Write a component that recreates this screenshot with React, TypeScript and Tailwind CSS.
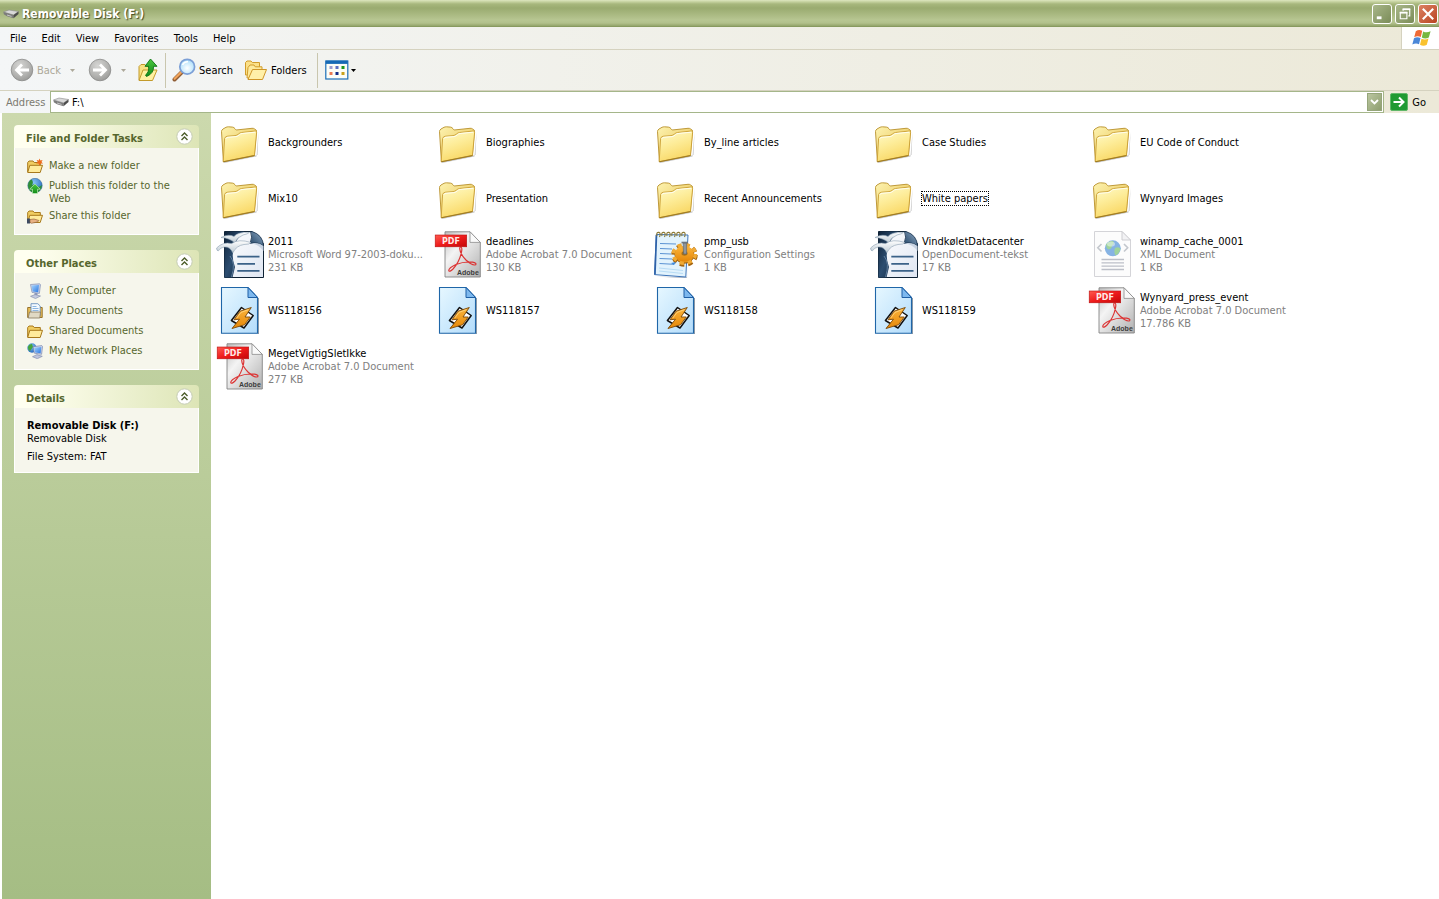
import React, { useState } from 'react';

type IconKind = 'folder' | 'writer' | 'pdf' | 'config' | 'xml' | 'winamp';

interface FileEntry {
  name: string;
  icon: IconKind;
  type?: string;
  size?: string;
  focused?: boolean;
}

interface TaskLink {
  label: string;
  icon: React.ReactNode;
}

const files: FileEntry[] = [
  { name: 'Backgrounders', icon: 'folder' },
  { name: 'Biographies', icon: 'folder' },
  { name: 'By_line articles', icon: 'folder' },
  { name: 'Case Studies', icon: 'folder' },
  { name: 'EU Code of Conduct', icon: 'folder' },
  { name: 'Mix10', icon: 'folder' },
  { name: 'Presentation', icon: 'folder' },
  { name: 'Recent Announcements', icon: 'folder' },
  { name: 'White papers', icon: 'folder', focused: true },
  { name: 'Wynyard Images', icon: 'folder' },
  { name: '2011', icon: 'writer', type: 'Microsoft Word 97-2003-doku...', size: '231 KB' },
  { name: 'deadlines', icon: 'pdf', type: 'Adobe Acrobat 7.0 Document', size: '130 KB' },
  { name: 'pmp_usb', icon: 'config', type: 'Configuration Settings', size: '1 KB' },
  { name: 'VindkøletDatacenter', icon: 'writer', type: 'OpenDocument-tekst', size: '17 KB' },
  { name: 'winamp_cache_0001', icon: 'xml', type: 'XML Document', size: '1 KB' },
  { name: 'WS118156', icon: 'winamp' },
  { name: 'WS118157', icon: 'winamp' },
  { name: 'WS118158', icon: 'winamp' },
  { name: 'WS118159', icon: 'winamp' },
  { name: 'Wynyard_press_event', icon: 'pdf', type: 'Adobe Acrobat 7.0 Document', size: '17.786 KB' },
  { name: 'MegetVigtigSletIkke', icon: 'pdf', type: 'Adobe Acrobat 7.0 Document', size: '277 KB' },
];

const menuItems = ['File', 'Edit', 'View', 'Favorites', 'Tools', 'Help'];

/** Gradients shared by all icons */
function IconDefs() {
  return (
    <svg className="absolute w-0 h-0" aria-hidden="true">
      <defs>
        <linearGradient id="folderBack" x1="0" y1="0" x2="1" y2="1">
          <stop offset="0" stopColor="#fdf3b0" />
          <stop offset="1" stopColor="#e5bb45" />
        </linearGradient>
        <linearGradient id="folderFront" x1="0" y1="0" x2="0.4" y2="1">
          <stop offset="0" stopColor="#fffbcb" />
          <stop offset="0.5" stopColor="#fdec98" />
          <stop offset="1" stopColor="#f9d866" />
        </linearGradient>
        <linearGradient id="navy" x1="0" y1="0" x2="1" y2="1">
          <stop offset="0" stopColor="#0e2238" />
          <stop offset="0.5" stopColor="#2c4d70" />
          <stop offset="1" stopColor="#12283f" />
        </linearGradient>
        <linearGradient id="writerPage" x1="0" y1="0" x2="1" y2="1">
          <stop offset="0" stopColor="#ffffff" />
          <stop offset="1" stopColor="#dfe6f2" />
        </linearGradient>
        <linearGradient id="bird" x1="0" y1="0" x2="0" y2="1">
          <stop offset="0" stopColor="#ffffff" />
          <stop offset="1" stopColor="#bccad3" />
        </linearGradient>
        <linearGradient id="fold" x1="0" y1="1" x2="1" y2="0">
          <stop offset="0" stopColor="#1f4061" />
          <stop offset="1" stopColor="#8fabc6" />
        </linearGradient>
        <linearGradient id="pdfPage" x1="0" y1="0" x2="1" y2="1">
          <stop offset="0" stopColor="#bdbdbd" />
          <stop offset="0.35" stopColor="#f4f4f4" />
          <stop offset="1" stopColor="#b0b0b0" />
        </linearGradient>
        <linearGradient id="pdfRed" x1="0" y1="0" x2="1" y2="1">
          <stop offset="0" stopColor="#ff5a50" />
          <stop offset="0.5" stopColor="#ee1c1c" />
          <stop offset="1" stopColor="#c40808" />
        </linearGradient>
        <linearGradient id="bluePage" x1="0" y1="0" x2="1" y2="1">
          <stop offset="0" stopColor="#e6f7ff" />
          <stop offset="1" stopColor="#b3dcfb" />
        </linearGradient>
        <linearGradient id="orange" x1="0" y1="0" x2="0" y2="1">
          <stop offset="0" stopColor="#fbb53d" />
          <stop offset="1" stopColor="#e58708" />
        </linearGradient>
        <radialGradient id="navGray" cx="0.4" cy="0.3" r="0.8">
          <stop offset="0" stopColor="#d6d6d4" />
          <stop offset="0.6" stopColor="#b2b2b0" />
          <stop offset="1" stopColor="#949492" />
        </radialGradient>
        <radialGradient id="lens" cx="0.5" cy="0.6" r="0.6">
          <stop offset="0" stopColor="#ffffff" />
          <stop offset="1" stopColor="#a8ddfb" />
        </radialGradient>
        <radialGradient id="globe" cx="0.4" cy="0.3" r="0.8">
          <stop offset="0" stopColor="#86c5f5" />
          <stop offset="1" stopColor="#1b5fb8" />
        </radialGradient>
        <linearGradient id="screen" x1="0" y1="0" x2="1" y2="1">
          <stop offset="0" stopColor="#a6d6ff" />
          <stop offset="1" stopColor="#2a76e0" />
        </linearGradient>
        <linearGradient id="greenArrow" x1="0" y1="0" x2="0" y2="1">
          <stop offset="0" stopColor="#4cc740" />
          <stop offset="1" stopColor="#118a18" />
        </linearGradient>
      </defs>
    </svg>
  );
}

function FolderIcon() {
  return (
    <svg viewBox="0 0 48 48" className="w-12 h-12 shrink-0" aria-hidden="true">
      <path d="M8 45L40.5 38.5L42.5 14L41.5 37L8 44Z" fill="#8b8b8b" opacity="0.5" />
      <path
        d="M5.5 13.5Q5.5 12 7 11L10 9.3Q11 8.8 12.5 8.8L16.5 9.1Q18 9.3 19 10.7L20.2 12L36 10.3Q37.5 10.1 38.5 10.9L40.5 12.4L38.3 37.5L7.4 43.6Z"
        fill="url(#folderBack)"
        stroke="#b8902a"
        strokeWidth="0.9"
        strokeLinejoin="round"
      />
      <path
        d="M8.6 20.5Q9.2 18.4 11.5 18.2L19 17.6Q21 17.4 22.5 16Q23.8 14.8 25.5 14.5L39.4 13Q40.8 12.9 40.6 14.6L38.5 37.3L7.2 43.7Z"
        fill="url(#folderFront)"
        stroke="#c99e33"
        strokeWidth="0.9"
        strokeLinejoin="round"
      />
      <path d="M9.8 20.8Q10.2 19.5 12 19.3L20 18.6Q22 18.4 23.4 16.8Q24.3 15.7 26 15.5L39.2 14.2" fill="none" stroke="#fffef0" strokeWidth="1" />
      <path d="M7.2 43.8L38.5 37.6" stroke="#9c7a24" strokeWidth="1" />
    </svg>
  );
}

function WriterIcon() {
  return (
    <svg viewBox="0 0 48 48" className="w-12 h-12 shrink-0" aria-hidden="true">
      <path d="M8.5 1.5H36L47.5 13.5V47.5H8.5Z" fill="url(#writerPage)" stroke="#0f2234" />
      <path d="M8.5 1.5H28Q20 9 18 17Q15 27 19 37L16.5 47.5H8.5Z" fill="url(#navy)" />
      <path d="M14 26Q20 33 15.5 47" fill="none" stroke="#5f7d9d" strokeWidth="1" />
      <path d="M34.5 1.5Q37 7 34 13.5Q42 11.5 47.5 16Q47 5 36 1.5Z" fill="url(#fold)" stroke="#16304b" strokeWidth="0.8" />
      <path d="M34 13.5Q42 11.5 47.5 16V21Q42 13.5 34 13.5Z" fill="#c8d3e2" />
      <path d="M21.3 26.7H43.5M21.3 33.8H39M21.3 40.8H43.5" stroke="#3b6288" strokeWidth="1.7" />
      <path d="M5 7.5Q12.5 3.5 18 6.5Q22 1.8 33.5 2.4Q32 4 27 5Q21 7.5 18.8 13Q14 8 5 7.5Z" fill="url(#bird)" stroke="#8ba0b2" strokeWidth="0.6" />
      <path d="M0.6 18Q7 11.5 15.5 13.6Q22.5 8.5 35 12.5Q34 14.5 28 14.5Q20.5 15.5 16.8 22.8Q14 16.5 8.5 17Q4.5 17.3 2.2 21Q0.6 20.8 0.6 18Z" fill="url(#bird)" stroke="#8ba0b2" strokeWidth="0.6" />
    </svg>
  );
}

function PdfIcon() {
  return (
    <svg viewBox="0 0 48 48" className="w-12 h-12 shrink-0" aria-hidden="true">
      <path d="M11 1.8H36L46.3 12.4V47H11Z" fill="url(#pdfPage)" stroke="#858585" strokeWidth="0.9" />
      <path d="M36 1.8V12.4H46.3Z" fill="#fafafa" stroke="#8c8c8c" strokeWidth="0.8" />
      <path
        d="M26.5 17Q28.5 17 27.5 22Q25.5 32 19 39Q15.5 42.5 14.8 40.5Q14.5 38 22 34.5Q30 31.3 38.5 32.2Q43 33 41.6 34.8Q38.5 36 32 30Q26 24 25.7 18.5Q25.8 17 26.5 17Z"
        fill="none"
        stroke="#dc3434"
        strokeWidth="1.2"
      />
      <rect x="1.2" y="5" width="31.5" height="11.8" fill="url(#pdfRed)" stroke="#b81010" strokeWidth="0.6" />
      <text x="8" y="14" className="font-['DejaVu_Sans',sans-serif] text-[8px] font-bold" fill="#ffe9e6">
        PDF
      </text>
      <text x="23" y="45" className="font-['Liberation_Sans',sans-serif] text-[7px] font-bold" fill="#3c3c3c">
        Adobe
      </text>
    </svg>
  );
}

function ConfigIcon() {
  return (
    <svg viewBox="0 0 48 48" className="w-12 h-12 shrink-0" aria-hidden="true">
      <path d="M4.5 46.5L35 48.5L37 8L35 47Z" fill="#8d98a8" opacity="0.6" />
      <path d="M4.3 4.5L36 5L33.8 47L2.5 44.6Z" fill="#e2f3fd" stroke="#3d74b8" strokeWidth="1" />
      <path d="M3 44.5L4.5 5" stroke="#2e61a8" strokeWidth="1.6" />
      <path d="M8 13.5L24 14M8 18.5L20 19M8 23.5L19 24M7.5 28.5L20 29M7.5 33.5L22 34.3" stroke="#5b93d3" strokeWidth="1" />
      <path d="M7 38L31 40.5M7 41L31 43.5" stroke="#b8dcf5" strokeWidth="1" />
      <path
        d="M5 6Q4 2 7 2.4Q9 3 7.5 7M10 6Q9 2 12 2.4Q14 3 12.5 7M15 6Q14 2 17 2.4Q19 3 17.5 7M20 6Q19 2 22 2.4Q24 3 22.5 7M25 6Q24 2 27 2.4Q29 3 27.5 7M30 6Q29 2 32 2.4Q34 3 32.5 7"
        fill="none"
        stroke="#8c7a35"
        strokeWidth="1.1"
      />
      <ellipse cx="32.5" cy="25" rx="9.5" ry="8.2" fill="#e59a23" stroke="#9c5d0a" strokeWidth="1" />
      <ellipse cx="32.5" cy="25" rx="11" ry="9.5" fill="none" stroke="#a4640e" strokeWidth="4.5" strokeDasharray="4.4 3.7" />
      <ellipse cx="32.3" cy="24" rx="11" ry="9.2" fill="none" stroke="#f0aa35" strokeWidth="3.6" strokeDasharray="4.2 3.9" />
      <ellipse cx="32.3" cy="23.8" rx="9.4" ry="7.8" fill="url(#orange)" />
      <ellipse cx="32.5" cy="23.5" rx="3" ry="2.2" fill="#a3701f" />
      <path d="M31 13H34.6V24H31.6Z" fill="#8f969d" stroke="#596068" strokeWidth="0.6" />
      <path d="M29.5 12.5H36" stroke="#6e757d" strokeWidth="1.6" />
      <path d="M19 33L24 32L22 35Z" fill="#3c8be0" />
    </svg>
  );
}

function XmlIcon() {
  return (
    <svg viewBox="0 0 48 48" className="w-12 h-12 shrink-0" aria-hidden="true">
      <path d="M6.5 1.5H34L42.5 10V46.5H6.5Z" fill="#fcfcfc" stroke="#d4d4d8" />
      <path d="M34 1.5V10H42.5Z" fill="#f2f2f4" stroke="#c9c9ce" strokeWidth="0.9" />
      <path d="M13.5 14L9.8 17.8L13.5 21.5M36 14L39.7 17.8L36 21.5" fill="none" stroke="#c3c7cd" strokeWidth="1.6" />
      <circle cx="24.8" cy="18.3" r="8" fill="#86b3e3" />
      <path d="M18 14.5Q21 10.5 25 11Q27 13.5 24 15.5Q24 19 20.5 19.5Q18 18 18 14.5ZM27 18Q31 16 32.5 19Q31 24 27.5 25.5Q25.5 22 27 18Z" fill="#9fd39b" />
      <ellipse cx="23" cy="14" rx="4" ry="2.6" fill="#ffffff" opacity="0.45" />
      <path d="M13.5 29.5H36M13.5 32.8H36M13.5 36.2H36M13.5 39.5H36" stroke="#bcbfc8" strokeWidth="1.3" />
    </svg>
  );
}

function WinampIcon() {
  return (
    <svg viewBox="0 0 48 48" className="w-12 h-12 shrink-0" aria-hidden="true">
      <path d="M7 48.3H42.5V12" fill="none" stroke="#8f9aa6" strokeWidth="1" />
      <path d="M5.5 1.5H32L41.5 11.5V47.3H5.5Z" fill="url(#bluePage)" stroke="#1f66a8" strokeWidth="1.1" />
      <path d="M32 1.5V11.5H41.5Z" fill="#7db8ee" stroke="#1f5fa5" strokeWidth="1" />
      <path d="M25.5 21.5L37.2 29.5L28 42L15.4 34.5Z" fill="#ffffff" stroke="#111111" strokeWidth="1.5" strokeLinejoin="round" />
      <path
        d="M35.3 21.5L24 25.2L18 33.8L23.5 33.2L16 42.5L28.5 38.8L34.3 31L29 31Z"
        fill="url(#orange)"
        stroke="#7a4706"
        strokeWidth="0.9"
        strokeLinejoin="round"
      />
      <path d="M32.5 23.6L25 26.4L20.8 32" fill="none" stroke="#ffd98a" strokeWidth="0.8" />
    </svg>
  );
}

const fileIcons: Record<IconKind, () => React.JSX.Element> = {
  folder: FolderIcon,
  writer: WriterIcon,
  pdf: PdfIcon,
  config: ConfigIcon,
  xml: XmlIcon,
  winamp: WinampIcon,
};

function DriveIcon() {
  return (
    <svg viewBox="0 0 16 16" className="w-4 h-4 shrink-0" aria-hidden="true">
      <path d="M0.5 6L6 4L15.5 5.5L10.5 9Z" fill="#d9d9d9" stroke="#8b8b8b" strokeWidth="0.6" />
      <path d="M0.5 6L10.5 9V12.3L4 10.3L0.8 8.2Z" fill="#7c7c7c" />
      <path d="M10.5 9L15.5 5.5V8L10.5 12.3Z" fill="#4b4b4b" />
      <path d="M4 9L8.5 10.4" stroke="#d8d8d8" strokeWidth="0.8" />
    </svg>
  );
}

/** 16px folder base used in the task pane */
function SmallFolder({ children }: { children?: React.ReactNode }) {
  return (
    <svg viewBox="0 0 16 16" className="w-4 h-4 shrink-0" aria-hidden="true">
      <path d="M0.7 14V4.5L2 3H6L7.2 4.5H13.3V7" fill="#f0cd62" stroke="#a8791c" />
      <path d="M0.7 14.5L2.8 7.3H15.5L13.2 14.5Z" fill="#ffeb9c" stroke="#a8791c" strokeLinejoin="round" />
      {children}
    </svg>
  );
}

const taskLinks: TaskLink[] = [
  {
    label: 'Make a new folder',
    icon: (
      <SmallFolder>
        <path d="M12.5 0.5L13.4 2.6L15.6 2L14.5 4L16 5.6L13.6 5.6L12.5 7.8L11.5 5.6L9 5.5L10.7 4L9.6 1.9L11.8 2.6Z" fill="#ee6a1c" />
      </SmallFolder>
    ),
  },
  {
    label: 'Publish this folder to the Web',
    icon: (
      <svg viewBox="0 0 16 16" className="w-4 h-4 shrink-0" aria-hidden="true">
        <circle cx="8" cy="7.5" r="7.2" fill="url(#globe)" stroke="#2b5d8c" strokeWidth="0.5" />
        <path d="M1 8Q1 3 4.5 1.5Q7 4 5 7L8 6L12 9L14.8 7Q15 12 10.5 14.5H5.5Q1.5 12.5 1 8Z" fill="#2f8f35" />
        <path d="M8 6L13.3 11.2H10.5V15.5H5.5V11.2H2.7Z" fill="url(#greenArrow)" stroke="#d5f5cf" strokeWidth="0.6" />
      </svg>
    ),
  },
  {
    label: 'Share this folder',
    icon: (
      <SmallFolder>
        <path d="M0 10.5H3V15.5H0Z" fill="#3d4a62" />
        <path d="M3 11.5L7 11L12 12.5L10.5 14L4.5 15.3L3 14.5Z" fill="#e8b184" stroke="#8a5a32" strokeWidth="0.6" />
      </SmallFolder>
    ),
  },
];

const placeLinks: TaskLink[] = [
  {
    label: 'My Computer',
    icon: (
      <svg viewBox="0 0 16 16" className="w-4 h-4 shrink-0" aria-hidden="true">
        <path d="M3.5 1.5L12.5 0.8L13.5 1.6L12.4 10.4L5 9.4Z" fill="#c9d2ea" stroke="#8390b5" strokeWidth="0.7" />
        <path d="M4.6 2.5L12 1.9L11.2 9.3L5.7 8.5Z" fill="url(#screen)" />
        <path d="M7.5 10H10.5V12.3H7.5Z" fill="#8f98bb" />
        <path d="M3.5 13.3L8 11.6L13.5 13L8.5 15.6Z" fill="#c3cae0" stroke="#7c86a8" strokeWidth="0.6" />
      </svg>
    ),
  },
  {
    label: 'My Documents',
    icon: (
      <svg viewBox="0 0 16 16" className="w-4 h-4 shrink-0" aria-hidden="true">
        <path d="M0.7 14.5V4.5H15.2V14.5Z" fill="#e9bf58" stroke="#98732a" strokeLinejoin="round" />
        <path d="M4 0.7H10.8L13.2 3V12.5H4Z" fill="#f4fafe" stroke="#5584b8" strokeWidth="0.8" />
        <path d="M5.5 3.5H9.5M5.5 5.5H11.5M5.5 7.5H11.5" stroke="#70a5da" strokeWidth="0.8" />
        <path d="M2.5 9H13.5L12.8 15H1.2Z" fill="#e0d9c4" stroke="#87765b" strokeWidth="0.8" />
      </svg>
    ),
  },
  { label: 'Shared Documents', icon: <SmallFolder /> },
  {
    label: 'My Network Places',
    icon: (
      <svg viewBox="0 0 16 16" className="w-4 h-4 shrink-0" aria-hidden="true">
        <circle cx="5" cy="5" r="4.7" fill="url(#globe)" />
        <path d="M0.8 4Q2 1 5 0.8L6 4L3 8Q1 7 0.8 4Z" fill="#45a53c" />
        <path d="M6 3.7L14.8 2.6L15.5 3.5L14.6 11.3L7.4 10.2Z" fill="#ccd5ec" stroke="#7784ad" strokeWidth="0.7" />
        <path d="M7 4.7L14.3 3.9L13.6 10.2L8.2 9.4Z" fill="url(#screen)" />
        <path d="M5.5 13.7L10 11.6L15.3 13.3L10.3 15.7Z" fill="#bdc4de" stroke="#7c86a8" strokeWidth="0.6" />
      </svg>
    ),
  },
];

function NavIcon({ forward = false }: { forward?: boolean }) {
  return (
    <svg viewBox="0 0 24 24" className="w-6 h-6 shrink-0" aria-hidden="true">
      <circle cx="12" cy="12" r="10.8" fill="url(#navGray)" stroke="#8c8c8a" strokeWidth="0.8" />
      {forward ? (
        <path d="M5 12H17M12 6.5L17.5 12L12 17.5" fill="none" stroke="#ffffff" strokeWidth="2.8" />
      ) : (
        <path d="M19 12H7M12 6.5L6.5 12L12 17.5" fill="none" stroke="#ffffff" strokeWidth="2.8" />
      )}
    </svg>
  );
}

function Caret({ className }: { className: string }) {
  return (
    <svg viewBox="0 0 5 3" className={`w-[5px] h-[3px] shrink-0 ${className}`} aria-hidden="true">
      <path d="M0 0H5L2.5 3Z" fill="currentColor" />
    </svg>
  );
}

function WindowButton({ label, className, children }: { label: string; className: string; children: React.ReactNode }) {
  return (
    <button
      aria-label={label}
      className={`w-5 h-5 rounded-[3px] border border-white bg-linear-to-br flex items-center justify-center ${className}`}
    >
      <svg viewBox="0 0 19 19" className="w-[18px] h-[18px]" fill="none" stroke="#ffffff" aria-hidden="true">
        {children}
      </svg>
    </button>
  );
}

function TitleBar() {
  return (
    <header className="h-[27px] pl-[3px] pr-px flex items-center gap-[3px] bg-[linear-gradient(180deg,#dde6c0_0,#c2cf9c_2px,#a7b77d_4px,#9aab70_8px,#a8b880_14px,#b7c692_20px,#b2c18c_23px,#93a46a_26px,#7d9055_27px)]">
      <DriveIcon />
      <h1 className="flex-1 text-[12px] leading-[16px] font-bold text-white [text-shadow:1px_1px_1px_#3f4a26]">Removable Disk (F:)</h1>
      <WindowButton label="Minimize" className="from-[#a9b78a] to-[#7b8c58]">
        <path d="M4 13.5H9" strokeWidth="3" />
      </WindowButton>
      <WindowButton label="Restore" className="from-[#a9b78a] to-[#7b8c58]">
        <path d="M7.5 6V4.5H14.5V11.5H13" strokeWidth="1.2" />
        <path d="M7 4.5H15" strokeWidth="1.8" />
        <path d="M4.5 8H11.5V14.5H4.5Z" strokeWidth="1.2" />
        <path d="M4 8H12" strokeWidth="1.8" />
      </WindowButton>
      <WindowButton label="Close" className="from-[#dc8263] to-[#b8431f]">
        <path d="M4 4L15 15M15 4L4 15" strokeWidth="2.2" />
      </WindowButton>
    </header>
  );
}

function MenuBar() {
  return (
    <div className="flex h-[23px] border-b border-[#d5d2bf]">
      <nav className="flex flex-1 items-center gap-[15px] pl-[10px]">
        {menuItems.map((item) => (
          <button key={item}>{item}</button>
        ))}
      </nav>
      <div className="flex w-[38px] items-center justify-center border-l border-[#d5d2bf] bg-white pl-[2px]">
        <svg viewBox="0 0 20 18" className="w-5 h-[18px]" aria-hidden="true">
          <path d="M3.8 2.2Q7 0 10.2 1.8L8.8 8Q5.6 6.3 2.2 8.2Z" fill="#ef6a35" />
          <path d="M11.2 2.4Q14.5 4.2 18.6 2.2L16.8 8.5Q13.2 10.3 9.8 8.5Z" fill="#76b83f" />
          <path d="M2 9.3Q5.2 7.4 8.5 9.1L7 15.2Q3.8 13.6 0.3 15.5Z" fill="#4a87d8" />
          <path d="M9.5 9.7Q12.8 11.4 16.5 9.6L14.8 15.8Q11.5 17.6 8 15.8Z" fill="#f9c22e" />
        </svg>
      </div>
    </div>
  );
}

function ToolBar() {
  return (
    <div className="flex h-[41px] items-center border-b border-[#d5d2bf] pl-[10px]">
      <button className="flex items-center gap-[3px] text-[#aca899]" disabled>
        <NavIcon />
        <span className="w-[30px] text-left">Back</span>
        <Caret className="mr-[13px]" />
      </button>
      <button className="flex items-center gap-[9px] text-[#aca899]" aria-label="Forward" disabled>
        <NavIcon forward />
        <Caret className="mr-2" />
      </button>
      <button aria-label="Up" className="mx-1">
        <svg viewBox="0 0 20 24" className="w-5 h-6" aria-hidden="true">
          <path d="M1 22V8.5L3 6.5H7L8.5 8.5H14V11" fill="#f8e182" stroke="#c39a2b" />
          <path d="M1 22.5L5 12H19L14.5 22.5Z" fill="#fff0a0" stroke="#c39a2b" strokeLinejoin="round" />
          <path d="M12.5 1L19 8.3H15.5Q16 15.5 8.5 18.5L7.5 17Q11.5 14 10.5 8.3H7Z" fill="url(#greenArrow)" stroke="#0c7414" strokeWidth="0.9" strokeLinejoin="round" />
        </svg>
      </button>
      <span className="ml-[3px] mr-[6px] h-[35px] w-px bg-[#c9c6ae]" />
      <button className="flex items-center gap-[3px]">
        <svg viewBox="0 0 24 24" className="w-6 h-6" aria-hidden="true">
          <path d="M10 14L2.5 21.5" stroke="#8f5d35" strokeWidth="4" strokeLinecap="round" />
          <path d="M9.8 13.6L2.6 20.8" stroke="#f0a35a" strokeWidth="2.2" strokeLinecap="round" />
          <circle cx="15.2" cy="8.7" r="7.4" fill="url(#lens)" stroke="#7c9fd6" strokeWidth="1.7" />
          <path d="M10.5 7Q12 3.5 16 3.8" fill="none" stroke="#ffffff" strokeWidth="1.5" />
        </svg>
        Search
      </button>
      <button className="ml-[11px] flex items-center gap-[3px]">
        <svg viewBox="0 0 24 24" className="w-6 h-6" aria-hidden="true">
          <path d="M1.5 17V4.5L3 3H7L8.3 4.5H15.5V17Z" fill="#fbe088" stroke="#d19c2b" />
          <path d="M3 20L4 9.5L6 7H10L11.2 8.8H18V20Z" fill="#fdea9c" stroke="#d19c2b" />
          <path d="M4 21.5L8.5 11.5H22.5L18.5 21.5Z" fill="#fff0a8" stroke="#cf9627" strokeLinejoin="round" />
        </svg>
        Folders
      </button>
      <span className="ml-[10px] mr-[7px] h-[35px] w-px bg-[#c9c6ae]" />
      <button aria-label="Views" className="flex items-center gap-[2px]">
        <svg viewBox="0 0 24 20" className="w-6 h-5" aria-hidden="true">
          <rect x="0.8" y="1" width="22" height="18" fill="#fdfdf6" stroke="#1c6fb8" strokeWidth="1.2" />
          <path d="M0.8 2.3H22.8" stroke="#1669b5" strokeWidth="3.2" />
          <rect x="4.5" y="6" width="3" height="3" fill="#9c9cd0" />
          <rect x="10.5" y="6" width="3" height="3" fill="#5c6fc2" />
          <rect x="16.5" y="6" width="3" height="3" fill="#1d961d" />
          <rect x="4.5" y="12" width="3" height="3" fill="#ea7a52" />
          <rect x="10.5" y="12" width="3" height="3" fill="#132c86" />
          <rect x="16.5" y="12" width="3" height="3" fill="#c9a11a" />
        </svg>
        <Caret className="text-black" />
      </button>
    </div>
  );
}

function AddressBar() {
  const [address, setAddress] = useState('F:\\');

  return (
    <div className="flex h-[22px] items-center">
      <label htmlFor="address" className="w-[50px] pl-[6px] text-[#7c7a70]">
        Address
      </label>
      <div className="flex h-[22px] flex-1 items-center border border-[#a5b68a] bg-white pl-[2px] pr-px">
        <DriveIcon />
        <input
          id="address"
          value={address}
          onChange={(e) => setAddress(e.target.value)}
          className="h-4 min-w-0 flex-1 bg-transparent pl-[3px] outline-none"
        />
        <button aria-label="Show addresses" className="flex h-[18px] w-[15px] items-center justify-center border border-[#95a57a] bg-linear-to-br from-[#bac6a0] to-[#8f9f70]">
          <svg viewBox="0 0 9 6" className="w-[9px] h-[6px]" aria-hidden="true">
            <path d="M1 1L4.5 4.5L8 1" fill="none" stroke="#ffffff" strokeWidth="1.8" />
          </svg>
        </button>
      </div>
      <button className="flex items-center gap-1 pl-[6px] pr-[13px]">
        <svg viewBox="0 0 18 18" className="w-[18px] h-[18px]" aria-hidden="true">
          <rect x="0.5" y="0.5" width="17" height="17" rx="1.5" fill="#1f9a32" stroke="#5fb768" />
          <path d="M3.5 9H13M9 4.5L13.5 9L9 13.5" fill="none" stroke="#ffffff" strokeWidth="2" />
        </svg>
        Go
      </button>
    </div>
  );
}

function TaskPanel({ title, children }: { title: string; children: React.ReactNode }) {
  return (
    <section>
      <div className="flex h-[23px] items-center justify-between rounded-t-[4px] bg-linear-to-r from-[#fffff0] from-10% to-[#dde5b6] pl-3 pr-[6px]">
        <h2 className="pt-[3px] font-bold text-[#56662d]">{title}</h2>
        <button aria-label={`Collapse ${title}`}>
          <svg viewBox="0 0 17 17" className="w-[17px] h-[17px]" aria-hidden="true">
            <circle cx="8.5" cy="8.5" r="7.7" fill="#ffffff" stroke="#c5ccb4" />
            <path d="M5.5 8L8.5 5L11.5 8M5.5 12L8.5 9L11.5 12" fill="none" stroke="#4c5c28" strokeWidth="1.4" />
          </svg>
        </button>
      </div>
      <div className="border border-t-0 border-white bg-[#f6f6ec]">{children}</div>
    </section>
  );
}

function TaskList({ links }: { links: TaskLink[] }) {
  return (
    <ul className="flex flex-col gap-1 px-3 py-[10px]">
      {links.map((link) => (
        <li key={link.label}>
          <a href="#" className="flex min-h-4 items-start gap-[6px] text-[#56662d]">
            {link.icon}
            <span className="-mb-px w-[124px] pt-px">{link.label}</span>
          </a>
        </li>
      ))}
    </ul>
  );
}

function FileTile({ file }: { file: FileEntry }) {
  const Icon = fileIcons[file.icon];

  return (
    <button className="flex h-14 w-full items-center gap-1 text-left">
      <Icon />
      <span className="flex min-w-0 flex-col items-start whitespace-nowrap">
        <span className={file.focused ? 'outline-1 outline-dotted outline-black' : ''}>{file.name}</span>
        {file.type && <span className="text-[#808080]">{file.type}</span>}
        {file.size && <span className="text-[#808080]">{file.size}</span>}
      </span>
    </button>
  );
}

export default function App() {
  return (
    <div className="flex min-h-screen flex-col bg-white font-['DejaVu_Sans_Condensed','DejaVu_Sans',sans-serif] text-[11px] leading-[13px] text-black">
      <IconDefs />
      <TitleBar />
      <div className="bg-linear-to-r from-[#f4f6f7] to-[#ece9d8]">
        <MenuBar />
        <ToolBar />
        <AddressBar />
      </div>

      <div className="flex flex-1">
        <aside className="ml-[2px] flex w-[209px] shrink-0 flex-col gap-[15px] bg-linear-to-b from-[#ccd9ad] to-[#a5bd84] px-3 pt-3">
          <TaskPanel title="File and Folder Tasks">
            <TaskList links={taskLinks} />
          </TaskPanel>
          <TaskPanel title="Other Places">
            <TaskList links={placeLinks} />
          </TaskPanel>
          <TaskPanel title="Details">
            <div className="px-3 pt-[11px] pb-[9px]">
              <p className="font-bold">Removable Disk (F:)</p>
              <p>Removable Disk</p>
              <p className="pt-[5px]">File System: FAT</p>
            </div>
          </TaskPanel>
        </aside>

        <main className="flex-1 pl-[5px] pt-px">
          <ul className="grid grid-cols-[repeat(auto-fill,218px)]">
            {files.map((file) => (
              <li key={file.name}>
                <FileTile file={file} />
              </li>
            ))}
          </ul>
        </main>
      </div>
    </div>
  );
}
